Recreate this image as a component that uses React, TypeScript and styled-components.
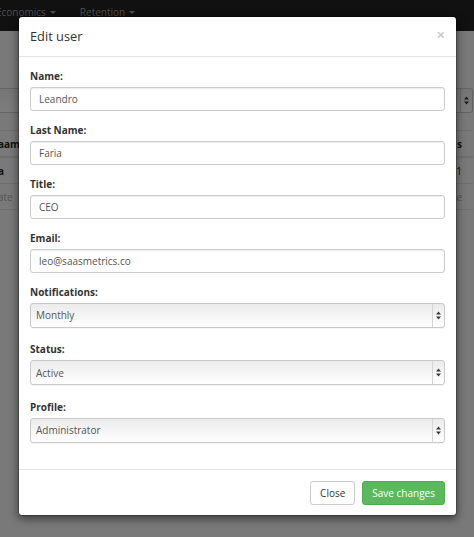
import React from "react";
import styled, { createGlobalStyle } from "styled-components";

const GlobalStyle = createGlobalStyle`
  html, body { margin: 0; padding: 0; }
  body { font-family: "Open Sans", "Liberation Sans", Arial, sans-serif; }
  *, *::before, *::after { box-sizing: border-box; }
`;

const Page = styled.div`
  position: relative;
  width: 474px;
  height: 537px;
  overflow: hidden;
  background: #f2f2f2;
`;

const Navbar = styled.nav`
  height: 31px;
  background: #222;
`;

const NavList = styled.div`
  display: flex;
  gap: 24px;
  margin-left: -4px;
`;

const NavItem = styled.span`
  display: flex;
  align-items: center;
  height: 24px;
  font-size: 10px;
  color: #9d9d9d;
`;

const Caret = styled.span`
  width: 0;
  height: 0;
  margin-left: 4px;
  border-left: 3px solid transparent;
  border-right: 3px solid transparent;
  border-top: 3px solid #9d9d9d;
`;

const Content = styled.div`
  padding: 57px 1px 0 0;
`;

const PageSelect = styled.div`
  height: 25px;
  margin-left: -10px;
  border: 1px solid #c8c8c8;
  border-radius: 3px;
  background: linear-gradient(#ececec, #fafafa);
  display: flex;
  justify-content: flex-end;
`;

const Table = styled.div`
  margin-top: 17px;
  border-top: 1px solid #dcdcdc;
`;

const Row = styled.div<{ $head?: boolean }>`
  display: flex;
  justify-content: space-between;
  align-items: center;
  height: ${(p) => (p.$head ? "27px" : "26px")};
  border-bottom: ${(p) => (p.$head ? "2px" : "1px")} solid #dcdcdc;
  font-size: 10px;
`;

const Cell = styled.span<{ $muted?: boolean; $bold?: boolean; $edge: "left" | "right" }>`
  color: ${(p) => (p.$muted ? "#aaa" : "#222")};
  font-weight: ${(p) => (p.$bold ? 700 : 400)};
  margin-left: ${(p) => (p.$edge === "left" ? "-2px" : "0")};
  margin-right: ${(p) => (p.$edge === "right" ? "11px" : "0")};
`;

const Overlay = styled.div`
  position: absolute;
  inset: 0;
  background: rgba(0, 0, 0, 0.5);
`;

const Modal = styled.div`
  position: absolute;
  top: 16px;
  left: 18px;
  width: 439px;
  background: #fff;
  border: 1px solid rgba(0, 0, 0, 0.2);
  border-radius: 4px;
  box-shadow: 0 3px 9px rgba(0, 0, 0, 0.5);
  background-clip: padding-box;
`;

const Header = styled.div`
  display: flex;
  justify-content: space-between;
  align-items: flex-start;
  padding: 10px 11px 11px;
  border-bottom: 1px solid #e5e5e5;
`;

const Title = styled.h4`
  margin: 0;
  font-size: 12.8px;
  line-height: 18px;
  font-weight: 400;
  color: #333;
`;

const CloseX = styled.button`
  border: 0;
  background: transparent;
  padding: 0;
  margin-top: 0;
  font-family: inherit;
  font-size: 15px;
  line-height: 15px;
  font-weight: 700;
  color: #000;
  opacity: 0.2;
`;

const Body = styled.div`
  padding: 11.5px 11px 12px;
`;

const Group = styled.div<{ $gap: number }>`
  display: flex;
  flex-direction: column;
  margin-bottom: ${(p) => p.$gap}px;
`;

const Label = styled.label`
  display: block;
  font-size: 10px;
  line-height: 14px;
  font-weight: 700;
  color: #333;
  margin-bottom: 4px;
`;

const Input = styled.input`
  height: 24px;
  width: 100%;
  padding: 0 8px;
  border: 1px solid #ccc;
  border-radius: 3px;
  box-shadow: inset 0 1px 1px rgba(0, 0, 0, 0.075);
  font-family: inherit;
  font-size: 10px;
  color: #555;
  background: #fff;
  outline: none;
`;

const SelectBox = styled.div`
  display: flex;
  height: 25px;
  border: 1px solid #c9c9c9;
  border-radius: 3px;
  background: linear-gradient(#ebebeb 0%, #f6f6f6 55%, #ffffff 100%);
  box-shadow: 0 1px 0 rgba(0, 0, 0, 0.04);
`;

const SelectValue = styled.span`
  flex: 1;
  display: flex;
  align-items: center;
  padding-left: 5px;
  font-size: 10px;
  color: #555;
`;

const ArrowCap = styled.span<{ $flush?: boolean }>`
  width: 12px;
  display: flex;
  align-items: center;
  justify-content: center;
  border-left: 1px solid #d6d6d6;
`;

const Footer = styled.div`
  display: flex;
  justify-content: flex-end;
  gap: 7px;
  padding: 11px 11px 10px;
  border-top: 1px solid #e5e5e5;
`;

const Button = styled.button<{ $primary?: boolean }>`
  height: 24px;
  padding: 0 9px;
  border-radius: 3px;
  border: 1px solid ${(p) => (p.$primary ? "#4cae4c" : "#ccc")};
  background: ${(p) => (p.$primary ? "#5cb85c" : "#fff")};
  color: ${(p) => (p.$primary ? "#fff" : "#333")};
  font-family: inherit;
  font-size: 10px;
  line-height: 14px;
`;

const Arrows = ({ color = "#3a3a3a" }: { color?: string }) => (
  <svg width="5" height="9" viewBox="0 0 5 9" aria-hidden="true">
    <path d="M2.5 0.5 L5 3.5 L0 3.5 Z" fill={color} />
    <path d="M0 5.5 L5 5.5 L2.5 8.5 Z" fill={color} />
  </svg>
);

const textFields = [
  { label: "Name:", value: "Leandro" },
  { label: "Last Name:", value: "Faria" },
  { label: "Title:", value: "CEO" },
  { label: "Email:", value: "leo@saasmetrics.co" },
];

const selectFields = [
  { label: "Notifications:", value: "Monthly" },
  { label: "Status:", value: "Active" },
  { label: "Profile:", value: "Administrator" },
];

export default function App() {
  return (
    <>
      <GlobalStyle />
      <Page>
        <Navbar>
          <NavList>
            <NavItem>
              Economics
              <Caret />
            </NavItem>
            <NavItem>
              Retention
              <Caret />
            </NavItem>
          </NavList>
        </Navbar>
        <Content>
          <PageSelect>
            <ArrowCap>
              <Arrows />
            </ArrowCap>
          </PageSelect>
          <Table>
            <Row $head>
              <Cell $edge="left" $bold>
                aam
              </Cell>
              <Cell $edge="right" $bold>
                s
              </Cell>
            </Row>
            <Row>
              <Cell $edge="left" $bold>
                a
              </Cell>
              <Cell $edge="right">1</Cell>
            </Row>
            <Row>
              <Cell $edge="left" $muted>
                ate
              </Cell>
              <Cell $edge="right" $muted>
                e
              </Cell>
            </Row>
          </Table>
        </Content>
        <Overlay />
        <Modal>
          <Header>
            <Title>Edit user</Title>
            <CloseX type="button">×</CloseX>
          </Header>
          <Body>
            {textFields.map((f) => (
              <Group key={f.label} $gap={12}>
                <Label>{f.label}</Label>
                <Input defaultValue={f.value} />
              </Group>
            ))}
            {selectFields.map((f) => (
              <Group key={f.label} $gap={14.5}>
                <Label>{f.label}</Label>
                <SelectBox>
                  <SelectValue>{f.value}</SelectValue>
                  <ArrowCap>
                    <Arrows />
                  </ArrowCap>
                </SelectBox>
              </Group>
            ))}
          </Body>
          <Footer>
            <Button type="button">Close</Button>
            <Button type="button" $primary>
              Save changes
            </Button>
          </Footer>
        </Modal>
      </Page>
    </>
  );
}
